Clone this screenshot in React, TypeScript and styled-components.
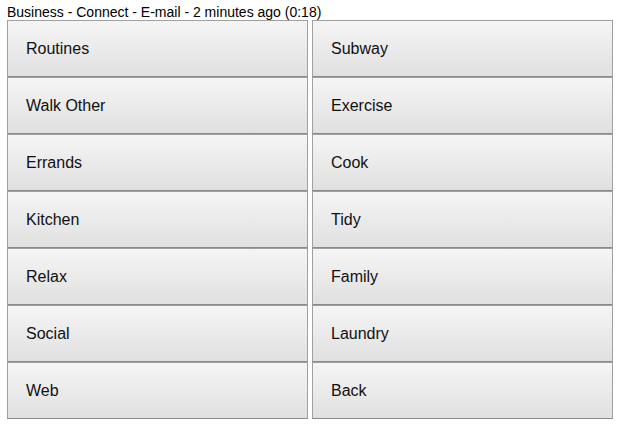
import React from "react";
import styled, { createGlobalStyle } from "styled-components";

const Global = createGlobalStyle`
  html, body { margin: 0; padding: 0; background: #fff; }
  body { font-family: "Liberation Sans", Arial, sans-serif; }
`;

const Page = styled.div`
  padding: 4px 7px 0 7px;
  width: 606px;
`;

const Header = styled.div`
  font-size: 14px;
  line-height: 16px;
  height: 16px;
  color: #000;
  white-space: nowrap;
`;

const Grid = styled.div`
  display: grid;
  grid-template-columns: 301px 301px;
  column-gap: 4px;
  grid-auto-rows: 57px;
`;

const Tile = styled.button`
  box-sizing: border-box;
  margin: 0;
  height: 57px;
  border: 1px solid #a0a0a0;
  border-bottom-color: #8a8a8a;
  background: linear-gradient(to bottom, #f5f5f5 0%, #e0e0e0 100%);
  font-family: "Liberation Sans", Arial, sans-serif;
  font-size: 16px;
  color: #111;
  text-align: left;
  padding: 0 0 0 18px;
  display: flex;
  align-items: center;
`;

const items: [string, string][] = [
  ["Routines", "Subway"],
  ["Walk Other", "Exercise"],
  ["Errands", "Cook"],
  ["Kitchen", "Tidy"],
  ["Relax", "Family"],
  ["Social", "Laundry"],
  ["Web", "Back"],
];

export default function App() {
  return (
    <>
      <Global />
      <Page>
        <Header>Business - Connect - E-mail - 2 minutes ago (0:18)</Header>
        <Grid>
          {items.flatMap(([a, b]) => [
            <Tile key={a}>{a}</Tile>,
            <Tile key={b}>{b}</Tile>,
          ])}
        </Grid>
      </Page>
    </>
  );
}
